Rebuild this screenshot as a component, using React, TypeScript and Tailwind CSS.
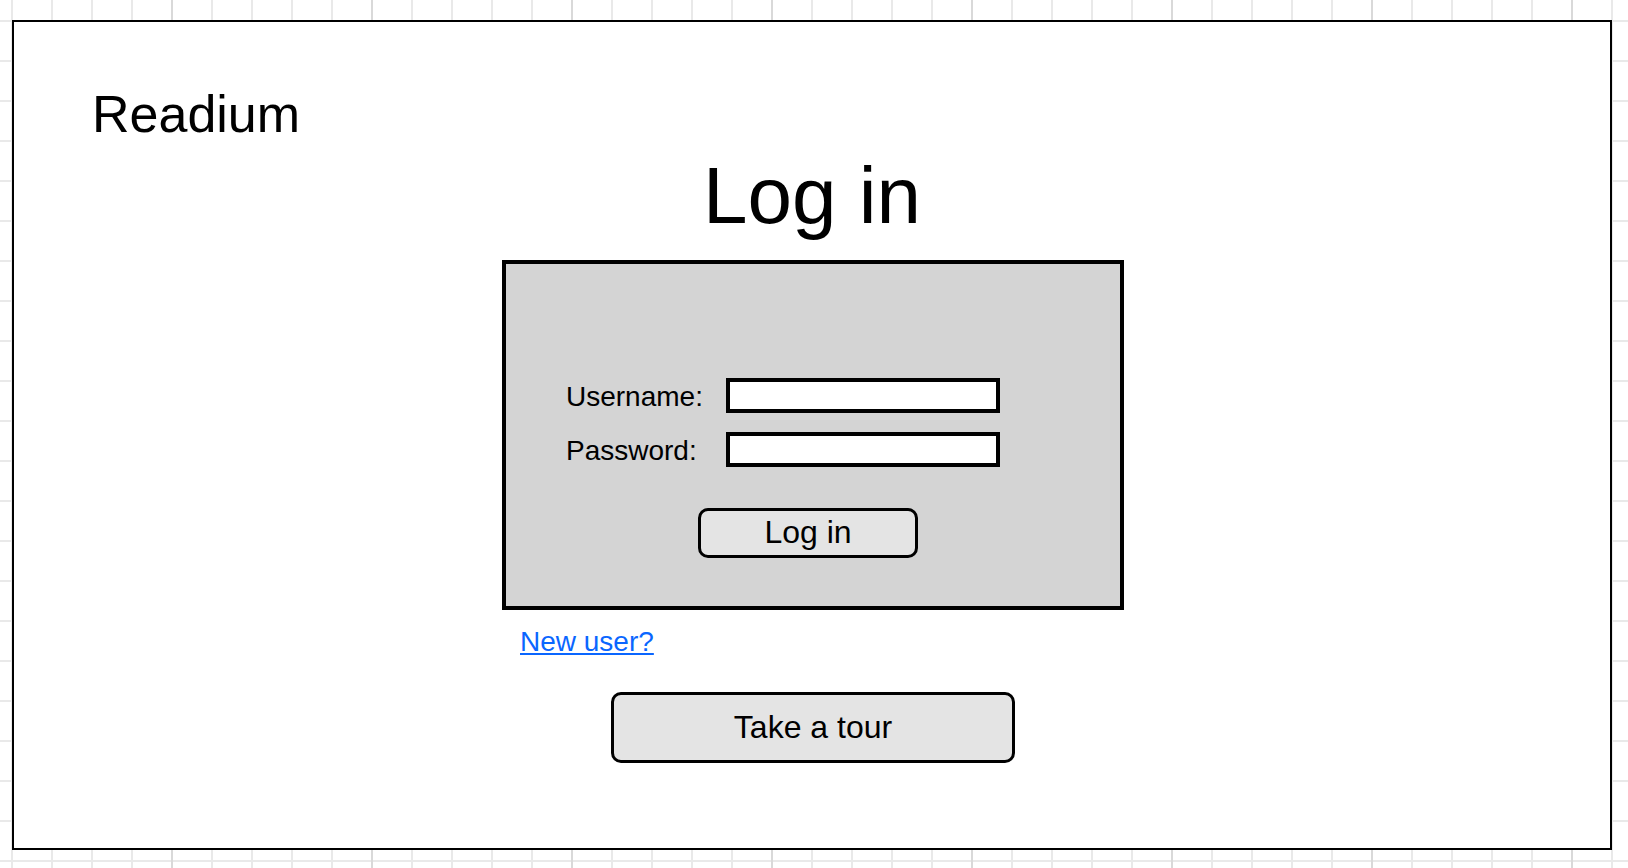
export default function App() {
  return (
    <div className="w-[1628px] h-[868px] overflow-hidden pt-[20px] pl-[12px] bg-white bg-[image:linear-gradient(to_right,#d9d9d9_2px,transparent_2px),linear-gradient(to_right,#e9e9e9_2px,transparent_2px),linear-gradient(to_bottom,#e9e9e9_2px,transparent_2px)] bg-[size:200px_100%,40px_40px,40px_40px] bg-[position:171px_0px,11px_20px,11px_20px] font-['Liberation_Sans',Arial,sans-serif] text-black">
      {/* Frame */}
      <div className="w-[1600px] h-[830px] border-2 border-black bg-white flex flex-col">
        <div className="pt-[66px] pl-[78px] text-[52px] leading-[52px]">Readium</div>

        <h1 className="mt-[16px] text-center text-[80px] leading-[80px]">Log in</h1>

        <div className="mt-[24px] flex flex-col items-center">
          <div className="w-[622px] ml-[2px]">
            {/* Login box */}
            <div className="h-[350px] border-4 border-black bg-[#d4d4d4] pt-[114px] pl-[60px] flex flex-col">
              <div className="flex items-center h-[35px]">
                <span className="w-[160px] pt-[2px] text-[28px] leading-[35px]">Username:</span>
                <div className="w-[274px] h-[35px] border-4 border-black bg-white" />
              </div>
              <div className="flex items-center h-[35px] mt-[19px]">
                <span className="w-[160px] pt-[2px] text-[28px] leading-[35px]">Password:</span>
                <div className="w-[274px] h-[35px] border-4 border-black bg-white" />
              </div>
              <button className="mt-[41px] ml-[132px] w-[220px] h-[50px] pb-[3px] border-[3px] border-black rounded-[10px] bg-[#e4e4e4] text-[32px] leading-[32px] flex items-center justify-center">
                Log in
              </button>
            </div>

            <a href="#" className="block mt-[18px] ml-[18px] w-fit text-[28px] leading-[28px] text-[#0a66ff] underline">
              New user?
            </a>
          </div>

          <button className="mt-[36px] ml-[2px] w-[404px] h-[71px] pb-[2px] border-[3px] border-black rounded-[10px] bg-[#e4e4e4] text-[32px] leading-[32px] flex items-center justify-center">
            Take a tour
          </button>
        </div>
      </div>
    </div>
  );
}
